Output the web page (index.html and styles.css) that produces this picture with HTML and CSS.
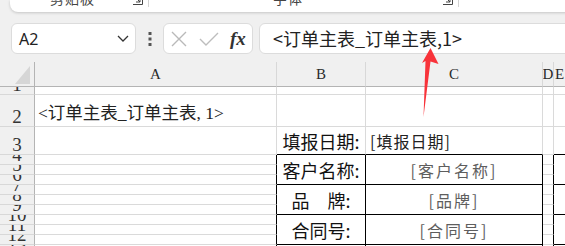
FILE: index.html
```html
<!DOCTYPE html>
<html lang="zh-CN">
<head>
    <meta charset="UTF-8">
    <title>订单主表</title>
    <link rel="stylesheet" href="styles.css">
</head>
<body>
    <div class="ribbon">
        <div class="group group-clip">
            <span class="group-label">剪贴板</span>
            <svg class="launcher" width="11" height="11" viewBox="0 0 11 11"><path d="M1 10.5H10.5V1M2 2L8 8M4 8H8V4" fill="none" stroke="#444" stroke-width="1"/></svg>
        </div>
        <div class="group group-font">
            <span class="group-label">字体</span>
            <svg class="launcher" width="11" height="11" viewBox="0 0 11 11"><path d="M1 10.5H10.5V1M2 2L8 8M4 8H8V4" fill="none" stroke="#444" stroke-width="1"/></svg>
        </div>
    </div>

    <div class="formula-bar">
        <div class="name-box">
            <span>A2</span>
            <svg width="12" height="7" viewBox="0 0 12 7"><path d="M1 1L6 6L11 1" fill="none" stroke="#333" stroke-width="1.3"/></svg>
        </div>
        <div class="more">
            <svg width="4" height="14" viewBox="0 0 4 14"><rect x="0.5" y="0" width="3" height="3" fill="#555"/><rect x="0.5" y="5.5" width="3" height="3" fill="#555"/><rect x="0.5" y="11" width="3" height="3" fill="#555"/></svg>
        </div>
        <div class="fx-box">
            <svg class="icon-x" width="16" height="16" viewBox="0 0 16 16"><path d="M1 1L15 15M15 1L1 15" stroke="#b9b9b9" stroke-width="1.4"/></svg>
            <svg class="icon-ok" width="20" height="14" viewBox="0 0 20 14"><path d="M1 7L7 13L19 1" fill="none" stroke="#bdbdbd" stroke-width="1.4"/></svg>
            <span class="fx">fx</span>
        </div>
        <div class="formula-input">&lt;订单主表_订单主表,1&gt;</div>
    </div>

    <div class="sheet">
        <!-- header -->
        <div class="corner"><div class="corner-mark"></div></div>
        <div class="hd">A</div>
        <div class="hd">B</div>
        <div class="hd">C</div>
        <div class="hd">D</div>
        <div class="hd">E</div>

        <!-- row 1 -->
        <div class="rh">1</div>
        <div class="c"></div><div class="c"></div><div class="c"></div><div class="c"></div><div class="c"></div>

        <!-- row 2 -->
        <div class="rh">2</div>
        <div class="c text-cell">&lt;订单主表_订单主表, 1&gt;</div>
        <div class="c"></div><div class="c"></div><div class="c"></div><div class="c"></div>

        <!-- row 3 -->
        <div class="rh">3</div>
        <div class="c"></div>
        <div class="c label under">填报日期:</div>
        <div class="c val-left under">[填报日期]</div>
        <div class="c"></div>
        <div class="c under"></div>

        <!-- rows 4-6 -->
        <div class="rh">4</div>
        <div class="c col-a edge"></div>
        <div class="c col-b box label">客户名称:</div>
        <div class="c col-c box val">[客户名称]</div>
        <div class="c col-d edge"></div>
        <div class="c col-e box-e"></div>
        <div class="rh">5</div>
        <div class="c col-a edge"></div>
        <div class="c col-d edge"></div>
        <div class="rh">6</div>
        <div class="c col-a edge"></div>
        <div class="c col-d edge"></div>

        <!-- rows 7-9 -->
        <div class="rh">7</div>
        <div class="c col-a edge"></div>
        <div class="c col-b box label">品&emsp;牌:</div>
        <div class="c col-c box val">[品牌]</div>
        <div class="c col-d edge"></div>
        <div class="c col-e box-e"></div>
        <div class="rh">8</div>
        <div class="c col-a edge"></div>
        <div class="c col-d edge"></div>
        <div class="rh">9</div>
        <div class="c col-a edge"></div>
        <div class="c col-d edge"></div>

        <!-- rows 10-12 -->
        <div class="rh">10</div>
        <div class="c col-a edge"></div>
        <div class="c col-b box label">合同号:</div>
        <div class="c col-c box val">[合同号]</div>
        <div class="c col-d edge"></div>
        <div class="c col-e box-e"></div>
        <div class="rh">11</div>
        <div class="c col-a edge"></div>
        <div class="c col-d edge"></div>
        <div class="rh">12</div>
        <div class="c col-a edge"></div>
        <div class="c col-d edge"></div>

        <!-- row 13 -->
        <div class="rh">13</div>
        <div class="c col-a edge"></div>
        <div class="c col-b box"></div>
        <div class="c col-c box"></div>
        <div class="c col-d edge"></div>
        <div class="c col-e box-e"></div>
    </div>

    <svg class="arrow" width="565" height="246" viewBox="0 0 565 246">
        <polygon points="430.5,48 438.5,64 430.5,61.5 423.5,117 425.5,61 422,63" fill="#f8333a"/>
    </svg>
</body>
</html>
```

FILE: styles.css
```css
body {
    margin: 0;
    background-color: #f0f0f0;
    font-family: "Noto Sans", "Noto Sans CJK SC", sans-serif;
    width: 565px;
    height: 246px;
    overflow: hidden;
    position: relative;
}

/* ribbon bottom edge */
.ribbon {
    display: flex;
    align-items: flex-start;
    margin-left: 10px;
    width: 600px;
    height: 12px;
    background-color: #fff;
    border-radius: 0 0 8px 8px;
    box-shadow: 0 1px 3px rgba(0,0,0,0.18);
    overflow: hidden;
}

.group {
    display: flex;
    flex-shrink: 0;
    align-items: flex-start;
    height: 7px;
    border-right: 1px solid #d2d2d2;
    box-sizing: border-box;
}

.group-clip {
    width: 139px;
    padding-left: 40px;
}

.group-font {
    width: 310px;
    padding-left: 124px;
}

.group-label {
    font-family: "Noto Sans CJK SC", sans-serif;
    font-size: 14px;
    line-height: 14px;
    margin-top: -9px;
    color: #444;
    letter-spacing: 1px;
}

.launcher {
    margin-left: auto;
    margin-right: 5px;
    margin-top: -6px;
}

/* formula bar */
.formula-bar {
    display: flex;
    margin-top: 11px;
    padding-left: 11px;
    height: 31px;
}

.formula-bar > div {
    flex-shrink: 0;
}

.name-box, .fx-box, .formula-input {
    box-sizing: border-box;
    height: 31px;
    background-color: #fff;
    border: 1px solid #dcdcdc;
    border-radius: 6px;
}

.name-box {
    width: 125px;
    display: flex;
    align-items: center;
    justify-content: space-between;
    padding: 0 6px 0 7px;
    font-size: 16px;
    color: #222;
}

.more {
    width: 27px;
    display: flex;
    align-items: center;
    justify-content: center;
}

.fx-box {
    width: 90px;
    display: flex;
    align-items: center;
    padding-left: 7px;
}

.icon-ok {
    margin-left: 12px;
}

.fx {
    margin-left: 11px;
    font-family: "Liberation Serif", serif;
    font-style: italic;
    font-weight: bold;
    font-size: 19px;
    color: #333;
}

.formula-input {
    width: 330px;
    margin-left: 6px;
    padding-left: 13px;
    font-family: "Noto Sans CJK SC", sans-serif;
    font-size: 18px;
    line-height: 29px;
    color: #222;
    white-space: nowrap;
}

/* sheet grid */
.sheet {
    margin-top: 8px;
    display: grid;
    grid-template-columns: 35px 242px 89px 177px 11px 12px 100px;
    grid-template-rows: 25px 8px 32px 28px repeat(10, 10px);
    background-color: #fff;
}

.sheet > div {
    box-sizing: border-box;
    overflow: hidden;
}

.corner {
    background-color: #f0f0f0;
    border-right: 1px solid #b4b4b4;
    border-bottom: 1px solid #b4b4b4;
    display: flex;
    justify-content: flex-end;
    align-items: flex-end;
    padding: 0 4px 2px 0;
}

.corner-mark {
    width: 0;
    height: 0;
    border-left: 15px solid transparent;
    border-bottom: 18px solid #d6d6d6;
}

.hd {
    background-color: #f0f0f0;
    border-right: 1px solid #d8d8d8;
    border-bottom: 1px solid #b4b4b4;
    font-family: "Liberation Serif", serif;
    font-size: 15px;
    color: #2a2a2a;
    display: flex;
    align-items: center;
    justify-content: center;
}

.rh {
    grid-column: 1;
    background-color: #f0f0f0;
    border-right: 1px solid #b4b4b4;
    border-bottom: 1px solid #d8d8d8;
    font-family: "Liberation Serif", serif;
    font-size: 19px;
    line-height: 19px;
    color: #333;
    display: flex;
    align-items: flex-end;
    justify-content: center;
}

.c {
    border-right: 1px solid #dadada;
    border-bottom: 1px solid #dadada;
    background-color: #fff;
}

.col-a { grid-column: 2; }
.col-b { grid-column: 3; grid-row: span 3; }
.col-c { grid-column: 4; grid-row: span 3; }
.col-d { grid-column: 5; }
.col-e { grid-column: 6 / span 2; grid-row: span 3; }

.edge {
    border-right-color: #000;
}

.under {
    border-bottom-color: #000;
}

.box {
    border-right-color: #000;
    border-bottom-color: #000;
}

.box-e {
    border-bottom-color: #000;
}

.text-cell {
    font-family: "Liberation Serif", "Noto Sans CJK SC", serif;
    font-size: 17.5px;
    color: #222;
    display: flex;
    align-items: center;
    padding: 2px 0 0 3px;
    white-space: nowrap;
}

.label {
    font-family: "Noto Sans CJK SC", sans-serif;
    font-size: 18px;
    color: #111;
    display: flex;
    align-items: center;
    justify-content: center;
    white-space: nowrap;
}

.val-left, .val {
    font-family: "Noto Sans CJK SC", sans-serif;
    font-size: 16px;
    display: flex;
    align-items: center;
    white-space: nowrap;
}

.val-left {
    padding-left: 4px;
    letter-spacing: 1px;
    color: #222;
}

.val {
    justify-content: center;
    letter-spacing: 2px;
    color: #5e5e5e;
}

.arrow {
    position: absolute;
    left: 0;
    top: 0;
    pointer-events: none;
}
```
